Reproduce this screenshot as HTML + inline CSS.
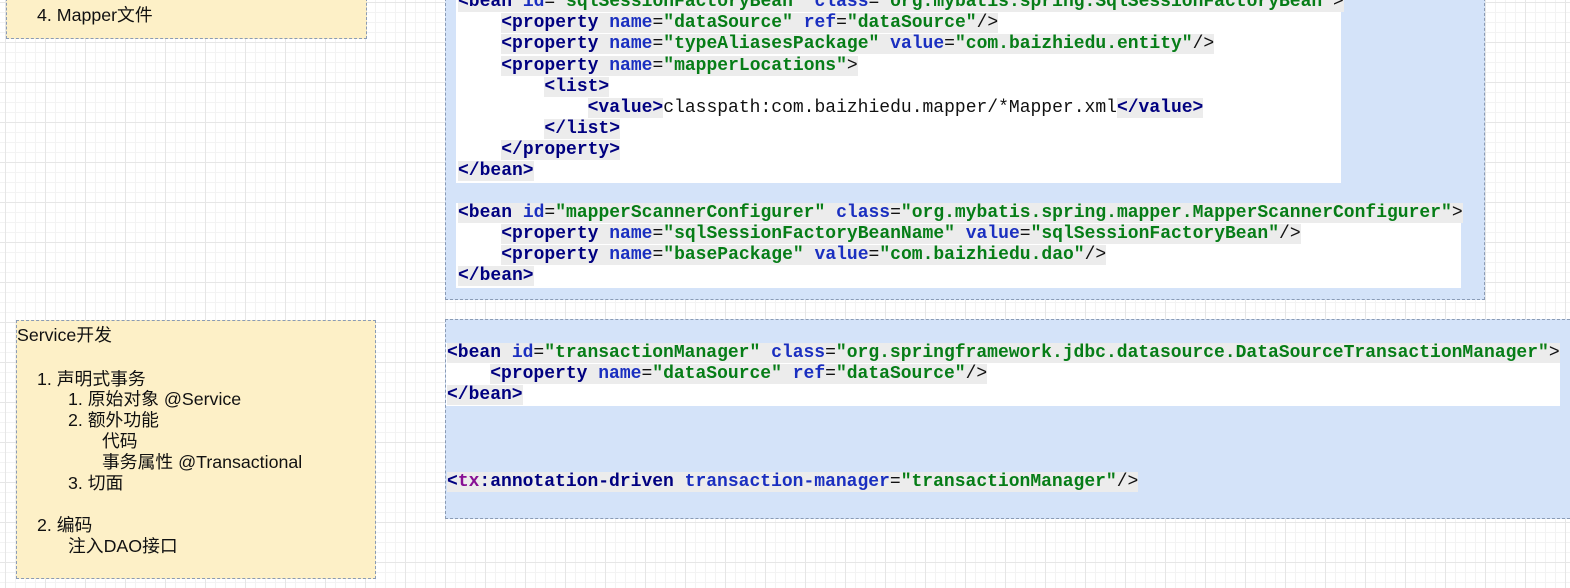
<!DOCTYPE html>
<html><head><meta charset="utf-8"><style>
body{margin:0;width:1570px;height:588px;overflow:hidden;position:relative;background-color:#fff;
background-image:linear-gradient(#e6e6e6 1px,transparent 1px),linear-gradient(90deg,#e6e6e6 1px,transparent 1px),linear-gradient(#f3f3f3 1px,transparent 1px),linear-gradient(90deg,#f3f3f3 1px,transparent 1px);
background-size:40px 40px,40px 40px,10px 10px,10px 10px;background-position:5px 2px,5px 2px,5px 2px,5px 2px;}
.box{position:absolute;box-sizing:border-box;border:1px dashed #8a9bb5;}
.y{background:#fdf0c7;}
.b{background:#d4e3f9;}
.w{position:absolute;background:#fff;}
.s{position:absolute;font-family:"Liberation Sans","Noto Sans CJK SC",sans-serif;font-size:17.8px;color:#111;white-space:pre;line-height:21px;}
.c{position:absolute;font-family:"Liberation Mono",monospace;font-size:18px;line-height:21px;white-space:pre;color:#111;}
.c2{font-size:18px;}
.h{background:#ececec;}
.t{color:#000080;font-weight:bold;}
.a{color:#1a2fc0;font-weight:bold;}
.v{color:#067d17;font-weight:bold;}
.x{color:#871094;font-weight:bold;}
</style></head><body>
<div class="box y" style="left:6px;top:-2px;width:361px;height:41px"></div>
<div class="s" style="left:37px;top:5px">4. Mapper文件</div>

<div class="box b" style="left:445px;top:-2px;width:1040px;height:302px"></div>
<div class="w" style="left:456px;top:0;width:885px;height:183px"></div>
<div class="w" style="left:456px;top:203px;width:1005px;height:85px"></div>
<div class="c" style="left:458px;top:-8px"><span class="h"><span class="t">&lt;bean </span><span class="a">id</span>=<span class="v">"sqlSessionFactoryBean"</span> <span class="a">class</span>=<span class="v">"org.mybatis.spring.SqlSessionFactoryBean"</span>&gt;</span></div>
<div class="c" style="left:458px;top:13px">    <span class="h"><span class="t">&lt;property </span><span class="a">name</span>=<span class="v">"dataSource"</span> <span class="a">ref</span>=<span class="v">"dataSource"</span>/&gt;</span></div>
<div class="c" style="left:458px;top:34px">    <span class="h"><span class="t">&lt;property </span><span class="a">name</span>=<span class="v">"typeAliasesPackage"</span> <span class="a">value</span>=<span class="v">"com.baizhiedu.entity"</span>/&gt;</span></div>
<div class="c" style="left:458px;top:56px">    <span class="h"><span class="t">&lt;property </span><span class="a">name</span>=<span class="v">"mapperLocations"</span>&gt;</span></div>
<div class="c" style="left:458px;top:77px">        <span class="h"><span class="t">&lt;list&gt;</span></span></div>
<div class="c" style="left:458px;top:98px">            <span class="h"><span class="t">&lt;value&gt;</span></span>classpath:com.baizhiedu.mapper/*Mapper.xml<span class="h"><span class="t">&lt;/value&gt;</span></span></div>
<div class="c" style="left:458px;top:119px">        <span class="h"><span class="t">&lt;/list&gt;</span></span></div>
<div class="c" style="left:458px;top:140px">    <span class="h"><span class="t">&lt;/property&gt;</span></span></div>
<div class="c" style="left:458px;top:161px"><span class="h"><span class="t">&lt;/bean&gt;</span></span></div>

<div class="c" style="left:458px;top:203px"><span class="h"><span class="t">&lt;bean </span><span class="a">id</span>=<span class="v">"mapperScannerConfigurer"</span> <span class="a">class</span>=<span class="v">"org.mybatis.spring.mapper.MapperScannerConfigurer"</span>&gt;</span></div>
<div class="c" style="left:458px;top:224px">    <span class="h"><span class="t">&lt;property </span><span class="a">name</span>=<span class="v">"sqlSessionFactoryBeanName"</span> <span class="a">value</span>=<span class="v">"sqlSessionFactoryBean"</span>/&gt;</span></div>
<div class="c" style="left:458px;top:245px">    <span class="h"><span class="t">&lt;property </span><span class="a">name</span>=<span class="v">"basePackage"</span> <span class="a">value</span>=<span class="v">"com.baizhiedu.dao"</span>/&gt;</span></div>
<div class="c" style="left:458px;top:266px"><span class="h"><span class="t">&lt;/bean&gt;</span></span></div>

<div class="box y" style="left:16px;top:320px;width:360px;height:259px"></div>
<div class="s" style="left:17px;top:325px">Service开发</div>
<div class="s" style="left:37px;top:369px">1. 声明式事务</div>
<div class="s" style="left:68px;top:389px">1. 原始对象 @Service</div>
<div class="s" style="left:68px;top:410px">2. 额外功能</div>
<div class="s" style="left:102px;top:431px">代码</div>
<div class="s" style="left:102px;top:452px">事务属性 @Transactional</div>
<div class="s" style="left:68px;top:473px">3. 切面</div>
<div class="s" style="left:37px;top:515px">2. 编码</div>
<div class="s" style="left:68px;top:536px">注入DAO接口</div>

<div class="box b" style="left:445px;top:319px;width:1130px;height:200px"></div>
<div class="w" style="left:446px;top:343px;width:1114px;height:63px"></div>
<div class="c c2" style="left:447px;top:343px"><span class="h"><span class="t">&lt;bean </span><span class="a">id</span>=<span class="v">"transactionManager"</span> <span class="a">class</span>=<span class="v">"org.springframework.jdbc.datasource.DataSourceTransactionManager"</span>&gt;</span></div>
<div class="c c2" style="left:447px;top:364px">    <span class="h"><span class="t">&lt;property </span><span class="a">name</span>=<span class="v">"dataSource"</span> <span class="a">ref</span>=<span class="v">"dataSource"</span>/&gt;</span></div>
<div class="c c2" style="left:447px;top:385px"><span class="h"><span class="t">&lt;/bean&gt;</span></span></div>
<div class="c c2" style="left:447px;top:472px"><span class="h"><span class="t">&lt;</span><span class="x">tx</span><span class="t">:annotation-driven </span><span class="a">transaction-manager</span>=<span class="v">"transactionManager"</span>/&gt;</span></div>
</body></html>
